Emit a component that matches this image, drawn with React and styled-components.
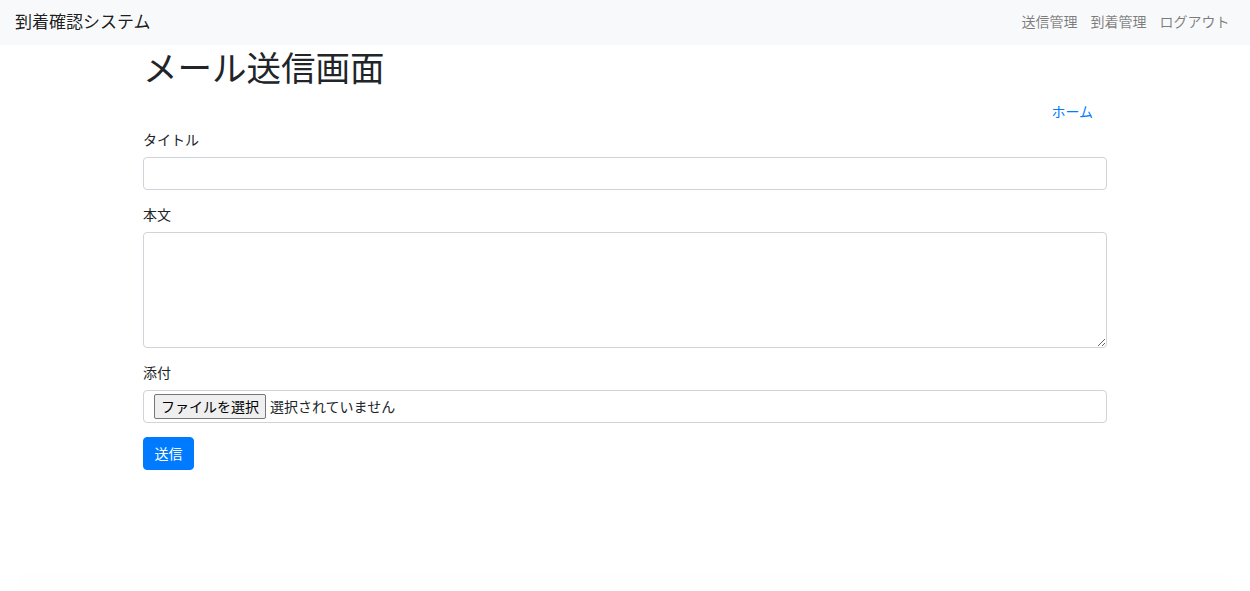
import styled, { createGlobalStyle } from 'styled-components'

const GlobalStyle = createGlobalStyle`
  html, body {
    margin: 0;
    padding: 0;
    background: #fff;
  }
  body {
    font-family: "Noto Sans CJK JP", "Noto Sans", sans-serif;
    font-size: 14px;
    line-height: 1.5;
    color: #212529;
  }
  * {
    box-sizing: border-box;
  }
`

const Page = styled.div`
  min-height: 591px;
  display: flex;
  flex-direction: column;
`

const Navbar = styled.nav`
  height: 45px;
  background-color: #f8f9fa;
  display: flex;
  justify-content: space-between;
  align-items: center;
  padding: 0 14px 0 15px;
`

const Brand = styled.a`
  font-size: 17px;
  color: rgba(0, 0, 0, 0.9);
  text-decoration: none;
  line-height: 1;
  margin-top: -4px;
`

const NavList = styled.ul`
  display: flex;
  list-style: none;
  margin: 0;
  padding: 0;
  margin-top: -3px;
`

const NavLink = styled.a`
  display: block;
  padding: 7px 6.5px;
  font-size: 14px;
  color: rgba(0, 0, 0, 0.5);
  text-decoration: none;
`

const Container = styled.main`
  width: 964px;
  margin: 0 auto;
  flex: 1;
`

const Title = styled.h1`
  font-size: 34.5px;
  font-weight: 400;
  line-height: 42px;
  margin: 0 0 7px;
`

const SubNav = styled.ul`
  display: flex;
  justify-content: flex-end;
  list-style: none;
  margin: 0;
  padding: 0;
`

const SubLink = styled.a`
  display: block;
  padding: 7px 14px;
  line-height: 21px;
  color: #007bff;
  text-decoration: none;
`

const FormGroup = styled.div`
  margin-bottom: 14px;
`

const Label = styled.label`
  display: block;
  line-height: 21px;
  margin-bottom: 7px;
`

const Input = styled.input`
  display: block;
  width: 100%;
  height: 33px;
  padding: 5px 10.5px;
  font: inherit;
  color: #495057;
  background: #fff;
  border: 1px solid #ced4da;
  border-radius: 4px;
`

const TextArea = styled.textarea`
  display: block;
  width: 100%;
  height: 116px;
  padding: 5px 10.5px;
  font: inherit;
  color: #495057;
  background: #fff;
  border: 1px solid #ced4da;
  border-radius: 4px;
  resize: vertical;
`

const FileBox = styled.div`
  display: flex;
  align-items: center;
  height: 33px;
  padding: 0 10px;
  border: 1px solid #ced4da;
  border-radius: 4px;
  font-size: 14px;
  color: #212529;
`

const FileButton = styled.span`
  display: inline-flex;
  align-items: center;
  height: 25px;
  padding: 0 6px;
  margin-right: 4px;
  background: #efefef;
  border: 1px solid #767676;
  border-radius: 2px;
  font-size: 14px;
  color: #000;
`

const SubmitButton = styled.button`
  display: block;
  height: 33px;
  padding: 0 10.5px;
  font: inherit;
  color: #fff;
  background-color: #007bff;
  border: 1px solid #007bff;
  border-radius: 4px;
`

const Footer = styled.footer`
  height: 12px;
  margin: 0 15px;
  border-radius: 12px 12px 0 0;
  box-shadow: 0 -3px 8px rgba(0, 0, 0, 0.012);
  background: #fefefe;
`

export default function App() {
  return (
    <Page>
      <GlobalStyle />
      <Navbar>
        <Brand href="#">到着確認システム</Brand>
        <NavList>
          <li><NavLink href="#">送信管理</NavLink></li>
          <li><NavLink href="#">到着管理</NavLink></li>
          <li><NavLink href="#">ログアウト</NavLink></li>
        </NavList>
      </Navbar>
      <Container>
        <Title>メール送信画面</Title>
        <SubNav>
          <li><SubLink href="#">ホーム</SubLink></li>
        </SubNav>
        <form onSubmit={(e) => e.preventDefault()}>
          <FormGroup>
            <Label>タイトル</Label>
            <Input type="text" />
          </FormGroup>
          <FormGroup>
            <Label>本文</Label>
            <TextArea />
          </FormGroup>
          <FormGroup>
            <Label>添付</Label>
            <FileBox>
              <FileButton>ファイルを選択</FileButton>
              選択されていません
            </FileBox>
          </FormGroup>
          <SubmitButton type="submit">送信</SubmitButton>
        </form>
      </Container>
      <Footer />
    </Page>
  )
}
